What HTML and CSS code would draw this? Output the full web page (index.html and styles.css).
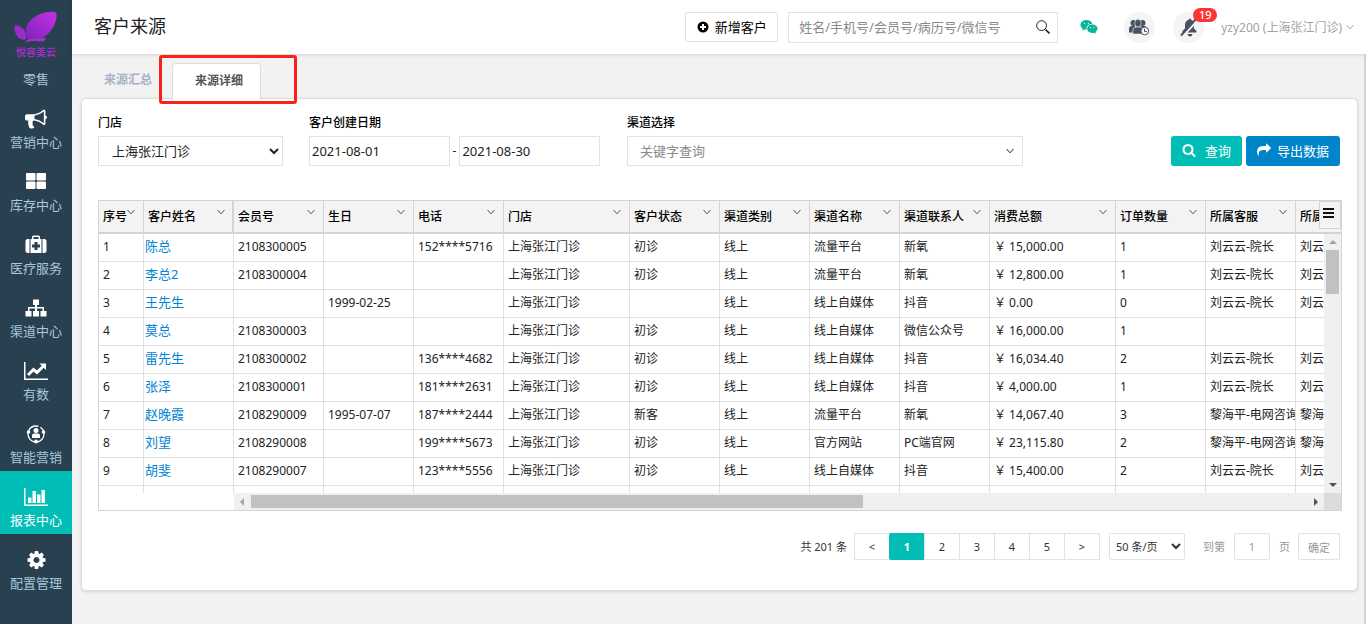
FILE: index.html
```
<!DOCTYPE html>
<html lang="zh-CN">
<head>
    <meta charset="UTF-8">
    <meta name="viewport" content="width=device-width, initial-scale=1.0">
    <title>客户来源</title>
    <link rel="stylesheet" href="styles.css">
</head>
<body>
    <svg class="sprite" aria-hidden="true">
        <symbol id="chevron" viewBox="0 0 8 8">
            <path d="M0.5 2L4 5.8L7.5 2" fill="none" stroke="currentColor" stroke-width="1"/>
        </symbol>
    </svg>

    <nav class="sidebar">
        <a class="logo" href="#">
            <svg width="44" height="34" viewBox="0 0 44 34">
                <defs>
                    <linearGradient id="wing" x1="0" y1="1" x2="1" y2="0">
                        <stop offset="0" stop-color="#7d22c0"/>
                        <stop offset="1" stop-color="#c433e0"/>
                    </linearGradient>
                </defs>
                <path d="M14 29C10 22 12 13 19 8C26 3 34 1 41 2C43 3 43 6 42 10C40 18 35 24 28 28C24 30 19 29 14 29Z" fill="url(#wing)"/>
                <path d="M12 29C13 23 10 16 1 15C0 19 1 25 5 28C8 30 10 30 12 29Z" fill="#9a2cc9"/>
                <path d="M12 30C18 28 24 29 31 28C33 31 28 32 22 31C18 31 14 31 13 33Z" fill="#a52fd2"/>
            </svg>
            <span class="logo-text">悦容美云</span>
        </a>
        <a class="shop" href="#">零售</a>
        <a class="nav-item" href="#">
            <svg width="22" height="22" viewBox="0 0 1792 1792"><path d="M1664 640q53 0 90.500 37.500t37.500 90.500-37.500 90.500-90.500 37.500v384q0 52-38 90t-90 38q-417-347-812-380-58 19-91 66t-31 100.500 40 92.500q-20 33-23 65.500t6 58 33.500 55 48 50 61.500 50.500q-29 58-111.500 83t-168.500 11.500-132-55.500q-7-23-29.500-87.500t-32-94.500-23-89-15-101 3.500-98.500 22-110.500h-122q-66 0-113-47t-47-113v-192q0-66 47-113t113-47h480q435 0 896-384 52 0 90 38t38 90v384zm-128 604v-954q-394 302-768 343v270q377 42 768 341z"/></svg>
            <span>营销中心</span>
        </a>
        <a class="nav-item" href="#">
            <svg width="22" height="22" viewBox="0 0 22 22"><rect x="1" y="2" width="9.500" height="7.500" rx="1"/><rect x="11.500" y="2" width="9.500" height="7.500" rx="1"/><rect x="1" y="10.500" width="9.500" height="7.500" rx="1"/><rect x="11.500" y="10.500" width="9.500" height="7.500" rx="1"/></svg>
            <span>库存中心</span>
        </a>
        <a class="nav-item" href="#">
            <svg width="22" height="22" viewBox="0 0 22 22"><path fill-rule="evenodd" d="M7 5V3Q7 1.500 8.500 1.500H13.500Q15 1.500 15 3V5H16.500V19H5.500V5ZM8.500 5H13.500V3H8.500ZM9.500 8V10.500H7V13.500H9.500V16H12.500V13.500H15V10.500H12.500V8Z"/><path d="M4.500 5V19H3Q0.500 19 0.500 17V7Q0.500 5 3 5ZM17.500 5V19H19Q21.500 19 21.500 17V7Q21.500 5 19 5Z"/></svg>
            <span>医疗服务</span>
        </a>
        <a class="nav-item" href="#">
            <svg width="22" height="22" viewBox="0 0 22 22"><path d="M8 2.500H14V8H12V10H19V14H21.500V19.500H15.500V14H17.500V11.500H12V14H14V19.500H8V14H10V11.500H4.500V14H6.500V19.500H0.500V14H3V10H10V8H8Z"/></svg>
            <span>渠道中心</span>
        </a>
        <a class="nav-item" href="#">
            <svg width="24" height="22" viewBox="0 0 24 22"><path d="M0 2H1.500V18.500H24V20H0Z"/><path d="M4 15L9.500 9.500L13 12.500L20 5.500" fill="none" stroke="#fff" stroke-width="3"/><path d="M15.500 3.500H22V10Z"/></svg>
            <span>有数</span>
        </a>
        <a class="nav-item" href="#">
            <svg width="22" height="22" viewBox="0 0 22 22"><circle cx="11" cy="11" r="8" fill="none" stroke="#fff" stroke-width="1.300" stroke-dasharray="12 2"/><circle cx="11" cy="7.500" r="2.500"/><path d="M7 15V12.500Q7 10.500 9 10.500H13Q15 10.500 15 12.500V15Z"/><circle cx="3.500" cy="9" r="1.800"/><circle cx="18.500" cy="9" r="1.800"/><circle cx="11" cy="18.500" r="2"/></svg>
            <span>智能营销</span>
        </a>
        <a class="nav-item active" href="#">
            <svg width="24" height="22" viewBox="0 0 24 22"><path d="M0 2H1.500V18.500H24V20H0ZM4 11.500H7.500V17H4ZM8.500 5H12V17H8.500ZM13 8.500H16.500V17H13ZM17.500 4H21V17H17.500Z"/></svg>
            <span>报表中心</span>
        </a>
        <a class="nav-item" href="#">
            <svg width="21" height="21" viewBox="0 0 1792 1792"><path d="M1152 896q0-106-75-181t-181-75-181 75-75 181 75 181 181 75 181-75 75-181zm512-109v222q0 12-8 23t-20 13l-185 28q-19 54-39 91 35 50 107 138 10 12 10 25t-9 23q-27 37-99 108t-94 71q-12 0-26-9l-138-108q-44 23-91 38-16 136-29 186-7 28-36 28h-222q-14 0-24.500-8.500t-11.500-21.500l-28-184q-49-16-90-37l-141 107q-10 9-25 9-14 0-25-11-126-114-165-168-7-10-7-23 0-12 8-23 15-21 51-66.500t54-70.500q-27-50-41-99l-183-27q-13-2-21-12.500t-8-23.500v-222q0-12 8-23t19-13l186-28q14-46 39-92-40-57-107-138-10-12-10-24 0-10 9-23 26-36 98.500-107.500t94.500-71.500q13 0 26 10l138 107q44-23 91-38 16-136 29-186 7-28 36-28h222q14 0 24.500 8.500t11.500 21.500l28 184q49 16 90 37l142-107q9-9 24-9 13 0 25 10 129 119 165 170 7 8 7 22 0 12-8 23-15 21-51 66.500t-54 70.500q26 50 41 98l183 28q13 2 21 12.500t8 23.500z"/></svg>
            <span>配置管理</span>
        </a>
    </nav>

    <div class="page">
        <header class="topbar">
            <h1>客户来源</h1>
            <button class="add-btn" type="button">
                <svg width="12" height="12" viewBox="0 0 12 12"><circle cx="6" cy="6" r="5.500"/><path d="M6 3V9M3 6H9" stroke="#fff" stroke-width="2"/></svg>
                新增客户
            </button>
            <div class="search">
                <input type="text" aria-label="搜索客户" placeholder="姓名/手机号/会员号/病历号/微信号">
                <button type="button" aria-label="搜索">
                    <svg width="14" height="14" viewBox="0 0 14 14"><path d="M9.500 9.500L13.500 13.500" stroke="#222" stroke-width="1.600"/><circle cx="5.600" cy="5.600" r="4.900" fill="none" stroke="#222"/></svg>
                </button>
            </div>
            <a class="wechat" href="#" aria-label="微信">
                <svg width="18" height="16" viewBox="0 0 18 16"><path fill="#07b597" d="M6.500 1C2.900 1 0.500 3.200 0.500 5.800C0.500 7.400 1.300 8.700 2.600 9.600L2.200 11.600L4.300 10.400C5 10.600 5.800 10.600 6.600 10.600C6 7.500 8.500 4.900 12.400 4.800C11.800 2.600 9.500 1 6.500 1Z"/><path fill="#07b597" d="M12.200 5.600C9.200 5.600 7.200 7.500 7.200 9.800C7.200 12.100 9.300 14 12.200 14C12.900 14 13.500 13.900 14.100 13.700L16 14.700L15.500 12.900C16.800 12.100 17.500 11 17.500 9.800C17.500 7.500 15.300 5.600 12.200 5.600Z"/><g fill="#fff"><circle cx="4.600" cy="4.300" r=".6"/><circle cx="8.400" cy="4.300" r=".6"/><circle cx="10.500" cy="8.600" r=".6"/><circle cx="14" cy="8.600" r=".6"/></g></svg>
            </a>
            <a class="round" href="#" aria-label="预约">
                <svg width="21" height="17" viewBox="0 0 21 17"><g fill="#4a5160"><circle cx="4.500" cy="4" r="3"/><path d="M0 13.500V10Q0 7 3 7H6V13.500Z"/><circle cx="13.500" cy="4" r="3"/><path d="M11 7H15Q17.500 7 17.500 10H11Z"/><ellipse cx="9" cy="4.200" rx="3.200" ry="4" stroke="#f4f4f4" stroke-width=".6"/><path d="M3.800 15V11Q4 8 7.500 8H10.500Q13.500 8 13.500 11V15Z" stroke="#f4f4f4" stroke-width=".6"/></g><circle cx="15.800" cy="12" r="3.900" fill="#f4f4f4" stroke="#4a5160"/><path d="M15.500 9.800V12.500H17.800" fill="none" stroke="#4a5160"/></svg>
            </a>
            <a class="round bell" href="#" aria-label="通知">
                <svg width="20" height="20" viewBox="0 0 20 20"><g fill="#4a5160"><path d="M11 1L12 2.500C14 3.500 15 5.500 15 8V11.500L17.500 14V15.500H3.500V14L6 11.500V8C6 5.500 7 3.500 10 2.500Z"/><path d="M8.500 17H13.500Q13 19.500 11 19.500T8.500 17Z"/></g><path d="M3.500 19.500L19 3" stroke="#f4f4f4" stroke-width="2"/><path d="M2 18.500L17 2" stroke="#4a5160" stroke-width="2"/></svg>
                <span class="badge">19</span>
            </a>
            <button class="user" type="button">yzy200 (上海张江门诊) <svg width="8" height="8"><use href="#chevron"/></svg></button>
        </header>

        <main>
            <div class="tabs">
                <a class="tab" href="#">来源汇总</a>
                <a class="tab current" href="#">来源详细</a>
                <span class="highlight"></span>
            </div>

            <section class="card">
                <form class="filters">
                    <div class="field store">
                        <label for="store">门店</label>
                        <select id="store"><option>上海张江门诊</option></select>
                    </div>
                    <div class="field dates">
                        <label for="dateFrom">客户创建日期</label>
                        <div class="range">
                            <input id="dateFrom" type="text" value="2021-08-01">
                            <span>-</span>
                            <input type="text" aria-label="结束日期" value="2021-08-30">
                        </div>
                    </div>
                    <div class="field channel">
                        <label for="channel">渠道选择</label>
                        <div class="combo">
                            <input id="channel" type="text" placeholder="关键字查询">
                            <svg width="8" height="8"><use href="#chevron"/></svg>
                        </div>
                    </div>
                    <div class="actions">
                        <button class="btn query" type="button">
                            <svg width="14" height="14" viewBox="0 0 1792 1792"><path d="M1216 832q0-185-131.500-316.500t-316.500-131.500-316.500 131.500-131.500 316.500 131.500 316.500 316.500 131.500 316.500-131.500 131.500-316.500zm512 832q0 52-38 90t-90 38q-54 0-90-38l-343-342q-179 124-399 124-143 0-273.500-55.500t-225-150-150-225-55.500-273.500 55.500-273.500 150-225 225-150 273.500-55.500 273.500 55.500 225 150 150 225 55.500 273.500q0 220-124 399l343 343q37 37 37 90z"/></svg>
                            查询
                        </button>
                        <button class="btn export" type="button">
                            <svg width="14" height="14" viewBox="0 0 1792 1792"><path d="M1792 640q0 26-19 45l-512 512q-19 19-45 19t-45-19-19-45v-256h-224q-98 0-175.500 6t-154 21.500-133 42.500-105.500 69.500-80 101-48.500 138.500-17.500 181q0 55 5 123 0 6 2.500 23.500t2.500 26.500q0 15-8.500 25t-23.500 10q-16 0-28-17-7-9-13-22t-13.500-30-10.500-24q-127-285-127-451 0-199 53-333 162-403 875-403h224v-256q0-26 19-45t45-19 45 19l512 512q19 19 19 45z"/></svg>
                            导出数据
                        </button>
                    </div>
                </form>

                <div class="grid">
                    <div class="grid-view">
                        <table>
                            <colgroup>
                                <col class="c-no"><col><col><col><col><col class="c-wide"><col><col><col><col><col class="c-wide"><col><col><col>
                            </colgroup>
                            <thead>
                                <tr>
                                    <th><div>序号<svg width="8" height="8"><use href="#chevron"/></svg></div></th>
                                    <th class="pinned"><div>客户姓名<svg width="8" height="8"><use href="#chevron"/></svg></div></th>
                                    <th><div>会员号<svg width="8" height="8"><use href="#chevron"/></svg></div></th>
                                    <th><div>生日<svg width="8" height="8"><use href="#chevron"/></svg></div></th>
                                    <th><div>电话<svg width="8" height="8"><use href="#chevron"/></svg></div></th>
                                    <th><div>门店<svg width="8" height="8"><use href="#chevron"/></svg></div></th>
                                    <th><div>客户状态<svg width="8" height="8"><use href="#chevron"/></svg></div></th>
                                    <th><div>渠道类别<svg width="8" height="8"><use href="#chevron"/></svg></div></th>
                                    <th><div>渠道名称<svg width="8" height="8"><use href="#chevron"/></svg></div></th>
                                    <th><div>渠道联系人<svg width="8" height="8"><use href="#chevron"/></svg></div></th>
                                    <th><div>消费总额<svg width="8" height="8"><use href="#chevron"/></svg></div></th>
                                    <th><div>订单数量<svg width="8" height="8"><use href="#chevron"/></svg></div></th>
                                    <th><div>所属客服<svg width="8" height="8"><use href="#chevron"/></svg></div></th>
                                    <th><div>所属</div></th>
                                </tr>
                            </thead>
                            <tbody>
                                <tr><td>1</td><td><a href="#">陈总</a></td><td>2108300005</td><td></td><td>152****5716</td><td>上海张江门诊</td><td>初诊</td><td>线上</td><td>流量平台</td><td>新氧</td><td>￥ 15,000.00</td><td>1</td><td>刘云云-院长</td><td>刘云</td></tr>
                                <tr><td>2</td><td><a href="#">李总2</a></td><td>2108300004</td><td></td><td></td><td>上海张江门诊</td><td>初诊</td><td>线上</td><td>流量平台</td><td>新氧</td><td>￥ 12,800.00</td><td>1</td><td>刘云云-院长</td><td>刘云</td></tr>
                                <tr><td>3</td><td><a href="#">王先生</a></td><td></td><td>1999-02-25</td><td></td><td>上海张江门诊</td><td></td><td>线上</td><td>线上自媒体</td><td>抖音</td><td>￥ 0.00</td><td>0</td><td>刘云云-院长</td><td>刘云</td></tr>
                                <tr><td>4</td><td><a href="#">莫总</a></td><td>2108300003</td><td></td><td></td><td>上海张江门诊</td><td>初诊</td><td>线上</td><td>线上自媒体</td><td>微信公众号</td><td>￥ 16,000.00</td><td>1</td><td></td><td></td></tr>
                                <tr><td>5</td><td><a href="#">雷先生</a></td><td>2108300002</td><td></td><td>136****4682</td><td>上海张江门诊</td><td>初诊</td><td>线上</td><td>线上自媒体</td><td>抖音</td><td>￥ 16,034.40</td><td>2</td><td>刘云云-院长</td><td>刘云</td></tr>
                                <tr><td>6</td><td><a href="#">张泽</a></td><td>2108300001</td><td></td><td>181****2631</td><td>上海张江门诊</td><td>初诊</td><td>线上</td><td>线上自媒体</td><td>抖音</td><td>￥ 4,000.00</td><td>1</td><td>刘云云-院长</td><td>刘云</td></tr>
                                <tr><td>7</td><td><a href="#">赵晚霞</a></td><td>2108290009</td><td>1995-07-07</td><td>187****2444</td><td>上海张江门诊</td><td>新客</td><td>线上</td><td>流量平台</td><td>新氧</td><td>￥ 14,067.40</td><td>3</td><td>黎海平-电网咨询</td><td>黎海</td></tr>
                                <tr><td>8</td><td><a href="#">刘望</a></td><td>2108290008</td><td></td><td>199****5673</td><td>上海张江门诊</td><td>初诊</td><td>线上</td><td>官方网站</td><td>PC端官网</td><td>￥ 23,115.80</td><td>2</td><td>黎海平-电网咨询</td><td>黎海</td></tr>
                                <tr><td>9</td><td><a href="#">胡斐</a></td><td>2108290007</td><td></td><td>123****5556</td><td>上海张江门诊</td><td>初诊</td><td>线上</td><td>线上自媒体</td><td>抖音</td><td>￥ 15,400.00</td><td>2</td><td>刘云云-院长</td><td>刘云</td></tr>
                                <tr><td></td><td></td><td></td><td></td><td></td><td></td><td></td><td></td><td></td><td></td><td></td><td></td><td></td><td></td></tr>
                            </tbody>
                        </table>
                    </div>
                    <button class="grid-menu" type="button" aria-label="列设置"><span></span></button>
                    <div class="vscroll">
                        <i class="arrow up"></i>
                        <div class="thumb"></div>
                        <i class="arrow down"></i>
                    </div>
                    <div class="hscroll">
                        <i class="arrow left"></i>
                        <div class="track"><div class="thumb"></div></div>
                        <i class="arrow right"></i>
                    </div>
                    <div class="corner"></div>
                </div>

                <div class="pager">
                    <span class="total">共 201 条</span>
                    <div class="pages">
                        <button type="button">&lt;</button>
                        <button class="on" type="button">1</button>
                        <button type="button">2</button>
                        <button type="button">3</button>
                        <button type="button">4</button>
                        <button type="button">5</button>
                        <button type="button">&gt;</button>
                    </div>
                    <select class="size" aria-label="每页条数"><option>50 条/页</option></select>
                    <label for="pageNo">到第</label>
                    <input id="pageNo" type="text" value="1">
                    <span class="unit">页</span>
                    <button class="go" type="button">确定</button>
                </div>
            </section>
        </main>
    </div>
</body>
</html>
```
FILE: styles.css
```
* {
    box-sizing: border-box;
}
body {
    margin: 0;
    min-height: 100vh;
    display: flex;
    background: #f2f2f2;
    font-family: "Noto Sans", "Noto Sans CJK SC", sans-serif;
    font-size: 12px;
    line-height: 18px;
    color: #222;
}
a {
    text-decoration: none;
}
button, input, select {
    font-family: inherit;
    font-size: inherit;
    color: inherit;
    margin: 0;
}
input, select {
    background: #fff;
    border: 1px solid #e2e2e2;
    outline: none;
}
button {
    cursor: pointer;
}
svg {
    flex: none;
}
.sprite {
    display: none;
}

/* sidebar */
.sidebar {
    flex: none;
    width: 72px;
    background: #28404f;
    font-size: 13px;
    text-align: center;
}
.sidebar a {
    color: #a9c6da;
}
.sidebar .logo {
    display: flex;
    flex-direction: column;
    align-items: center;
    padding-top: 10px;
}
.sidebar .logo-text {
    font-size: 10px;
    font-weight: 700;
    line-height: 16px;
    color: #a02fc6;
}
.sidebar .shop {
    display: block;
    padding: 10px 0 5px;
}
.nav-item {
    display: flex;
    flex-direction: column;
    align-items: center;
    gap: 3px;
    height: 63px;
    padding-top: 15px;
}
.nav-item svg {
    height: 22px;
    fill: #fff;
}
.sidebar .active {
    background: #00bdb6;
    color: #fff;
}

/* top bar */
.page {
    flex: 1;
    min-width: 0;
    display: flex;
    flex-direction: column;
}
.topbar {
    position: relative;
    display: flex;
    align-items: center;
    height: 54px;
    padding: 0 12px 0 22px;
    background: #fff;
    box-shadow: 0 1px 4px rgba(0, 0, 0, 0.12);
}
h1 {
    margin: 0 auto 0 0;
    padding-bottom: 2px;
    font-size: 18px;
    font-weight: 400;
    line-height: 24px;
}
.add-btn {
    display: flex;
    align-items: center;
    justify-content: center;
    gap: 6px;
    width: 93px;
    height: 30px;
    padding: 0 0 1px;
    margin-right: 10px;
    background: #fff;
    border: 1px solid #e2e2e2;
    border-radius: 2px;
    font-size: 13px;
    color: #000;
}
.search {
    display: flex;
    width: 270px;
    height: 31px;
    border: 1px solid #e2e2e2;
}
.search input {
    flex: 1;
    min-width: 0;
    padding: 0 10px;
    border: 0;
    font-size: 13px;
}
.search button {
    display: flex;
    align-items: center;
    padding: 0 7px;
    background: none;
    border: 0;
}
::placeholder {
    color: #8a8a8a;
    opacity: 1;
}
.wechat {
    display: flex;
    margin: 0 26px 0 22px;
}
.round {
    position: relative;
    display: flex;
    align-items: center;
    justify-content: center;
    width: 31px;
    height: 31px;
    background: #f4f4f4;
    border-radius: 50%;
}
.bell {
    margin: 0 17px 0 18px;
}
.badge {
    position: absolute;
    left: 20px;
    top: -4px;
    width: 24px;
    border-radius: 7px;
    background: #fd3434;
    color: #fff;
    font-size: 11px;
    font-weight: 500;
    line-height: 14px;
    text-align: center;
}
.user {
    display: flex;
    align-items: center;
    gap: 4px;
    padding: 0;
    background: none;
    border: 0;
    color: #a3a3a3;
}

/* tabs */
main {
    flex: 1;
    padding: 9px 6px 32px 9px;
    border-right: 2px solid #d2d2d2;
}
.tabs {
    position: relative;
    display: flex;
    height: 35px;
}
.tab {
    padding: 0 20px 0 23px;
    color: #a5b2c4;
    font-weight: 700;
    line-height: 34px;
}
.tab.current {
    position: relative;
    height: 37px;
    padding: 0 17px 0 22px;
    background: #fff;
    border: 1px solid #dcdcdc;
    border-bottom: 0;
    border-radius: 4px 4px 0 0;
    color: #555;
}
.highlight {
    position: absolute;
    left: 78px;
    top: -8px;
    width: 138px;
    height: 49px;
    border: 3px solid #fd2217;
    border-radius: 3px;
}

/* card and filters */
.card {
    padding: 14px 15px 30px 16px;
    background: #fff;
    border: 1px solid #dcdcdc;
    border-radius: 5px;
    box-shadow: 0 1px 3px rgba(0, 0, 0, 0.12);
}
.filters {
    display: flex;
    align-items: flex-end;
    padding-right: 2px;
}
.field {
    display: flex;
    flex-direction: column;
    gap: 4px;
    color: #222;
}
.field label {
    padding-top: 1px;
    font-weight: 500;
    color: #000;
}
.field input, .field select {
    height: 30px;
    font-size: 13px;
}
.store {
    width: 185px;
    margin-right: 26px;
}
.store select {
    padding: 0 0 0 9px;
}
.dates {
    width: 291px;
    margin-right: 27px;
}
.range {
    display: flex;
    align-items: center;
    gap: 3px;
}
.range input {
    flex: 1;
    min-width: 0;
    padding: 0 2px;
}
.channel {
    width: 396px;
}
.combo {
    display: flex;
    align-items: center;
    padding-right: 8px;
    border: 1px solid #e2e2e2;
}
.combo input {
    flex: 1;
    height: 28px;
    padding: 0 12px;
    border: 0;
}
.actions {
    display: flex;
    gap: 4px;
    margin-left: auto;
}
.btn {
    display: flex;
    align-items: center;
    height: 30px;
    padding: 0 11px 2px;
    border: 0;
    border-radius: 3px;
    color: #fff;
    font-size: 13px;
}
.btn svg {
    fill: #fff;
}
.query {
    gap: 9px;
    background: #00bdb6;
}
.export {
    gap: 6px;
    background: #0084c9;
}

/* data grid */
.grid {
    position: relative;
    display: grid;
    grid-template-columns: minmax(0, 1fr) 17px;
    grid-template-rows: 33px 259px 17px;
    margin-top: 34px;
    border: 1px solid #d4d4d4;
}
.grid-view {
    grid-area: 1 / 1 / 3 / 3;
    overflow: hidden;
}
table {
    width: 1287px;
    table-layout: fixed;
    border-collapse: separate;
    border-spacing: 0;
}
col {
    width: 90px;
}
.c-no {
    width: 45px;
}
.c-wide {
    width: 126px;
}
th, td {
    overflow: hidden;
    white-space: nowrap;
    text-align: left;
}
th {
    height: 33px;
    padding: 0 8px 0 4px;
    background: #f3f3f3;
    border-right: 1px solid #d4d4d4;
    border-bottom: 2px solid #d4d4d4;
    font-weight: 500;
    color: #000;
}
th.pinned {
    border-right-width: 2px;
    padding-right: 7px;
}
th div {
    display: flex;
    justify-content: space-between;
}
th svg {
    color: #555;
}
td {
    height: 28px;
    padding: 0 4px 2px;
    line-height: 25px;
    border-right: 1px solid #e0e0e0;
    border-bottom: 1px solid #e0e0e0;
}
td a {
    display: block;
    margin-left: -3px;
    color: #0084d4;
    font-size: 13px;
}
.grid-menu {
    position: absolute;
    top: 0;
    right: 0;
    width: 22px;
    height: 28px;
    padding: 0 6px 0 3px;
    background: #f3f3f3;
    border: 1px solid #d4d4d4;
}
.grid-menu span {
    display: block;
    height: 10px;
    margin-bottom: 5px;
    border-top: 2px solid #111;
    border-bottom: 2px solid #111;
    background: linear-gradient(#111, #111) center / 100% 2px no-repeat;
}
.vscroll {
    grid-area: 2 / 2;
    display: flex;
    flex-direction: column;
    align-items: center;
    background: #f0f0f0;
}
.vscroll .thumb {
    width: 13px;
    height: 44px;
    margin-bottom: auto;
    background: #c1c1c1;
}
.hscroll {
    grid-area: 3 / 1;
    display: flex;
    align-items: center;
    margin-left: 135px;
    background: #f0f0f0;
}
.hscroll .track {
    flex: 1;
}
.hscroll .thumb {
    width: 58%;
    height: 13px;
    background: #c1c1c1;
}
.arrow {
    border: 4px solid transparent;
}
.up {
    margin: 2px 0 6px;
    border-bottom-color: #a3a3a3;
}
.down {
    margin-bottom: 2px;
    border-top-color: #505050;
}
.left {
    margin: 0 7px 0 2px;
    border-right-color: #a3a3a3;
}
.right {
    margin: 0 2px 0 7px;
    border-left-color: #505050;
}
.corner {
    grid-area: 3 / 2;
    background: #dcdcdc;
}

/* pager */
.pager {
    display: flex;
    align-items: center;
    justify-content: flex-end;
    margin-top: 22px;
    padding-right: 2px;
    font-size: 11px;
    color: #333;
}
.pager select, .pager input, .pager button {
    height: 27px;
    background: #fff;
    border: 1px solid #e2e2e2;
    border-radius: 2px;
}
.pages {
    display: flex;
    margin: 0 9px 0 8px;
}
.pager .pages button {
    width: 36px;
    padding: 0;
    margin-left: -1px;
    border-radius: 0;
}
.pager .pages .on {
    background: #00bdb6;
    border-color: #00bdb6;
    border-radius: 2px;
    color: #fff;
    font-weight: 700;
}
.size {
    width: 76px;
    padding: 0 0 0 2px;
    margin-right: 18px;
}
.pager label, .pager input, .unit, .pager .go {
    color: #999;
}
.pager input {
    width: 36px;
    margin: 0 9px;
    padding: 0;
    text-align: center;
}
.pager .go {
    width: 42px;
    padding: 0;
    margin-left: 8px;
}
```
